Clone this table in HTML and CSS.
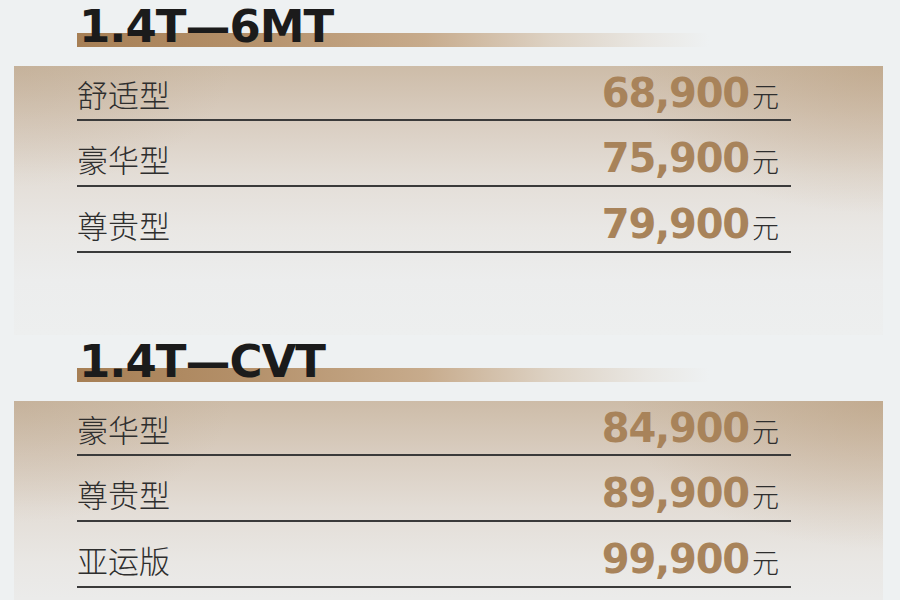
FILE: index.html
```html
<!DOCTYPE html>
<html lang="zh-CN">
<head>
<meta charset="utf-8">
<title>1.4T 价格表</title>
<link rel="stylesheet" href="styles.css">
</head>
<body>
<div class="page">
  <section class="group">
    <h2 class="heading">1.4T—6MT</h2>
    <div class="panel">
      <div class="row"><span class="name">舒适型</span><span class="price">68,900<span class="unit">元</span></span></div>
      <div class="row"><span class="name">豪华型</span><span class="price">75,900<span class="unit">元</span></span></div>
      <div class="row"><span class="name">尊贵型</span><span class="price">79,900<span class="unit">元</span></span></div>
    </div>
  </section>
  <section class="group">
    <h2 class="heading">1.4T—CVT</h2>
    <div class="panel">
      <div class="row"><span class="name">豪华型</span><span class="price">84,900<span class="unit">元</span></span></div>
      <div class="row"><span class="name">尊贵型</span><span class="price">89,900<span class="unit">元</span></span></div>
      <div class="row"><span class="name">亚运版</span><span class="price">99,900<span class="unit">元</span></span></div>
    </div>
  </section>
</div>
</body>
</html>
```
FILE: styles.css
```css
html, body {
  margin: 0;
  padding: 0;
  overflow: hidden;
}
body {
  background: #eef1f2;
  font-family: "Noto Sans CJK SC", "Noto Sans", sans-serif;
}
.page {
  width: 900px;
  height: 600px;
  overflow: hidden;
}
.group {
  height: 335px;
}
.heading {
  margin: 0 0 0 77px;
  height: 66px;
  padding-left: 2px;
  font-family: "DejaVu Sans", sans-serif;
  font-weight: bold;
  font-size: 45px;
  line-height: 54px;
  letter-spacing: -1px;
  color: #1b1b1b;
  background-image: linear-gradient(to right, #a67f55 0%, #b38f68 25%, #c7ab8c 55%, #ddd2c4 75%, #e9e7e3 90%, rgba(238,241,242,0) 100%);
  background-repeat: no-repeat;
  background-size: 632px 14px;
  background-position: 0 33px;
}
.panel {
  margin: 0 17px 0 14px;
  height: 269px;
  padding: 0 0 0 63px;
  box-sizing: border-box;
  background:
    radial-gradient(ellipse 30% 55% at 100% 0%, rgba(180,150,115,0.45), rgba(180,150,115,0)),
    radial-gradient(ellipse 25% 45% at 0% 0%, rgba(180,155,125,0.3), rgba(180,155,125,0)),
    linear-gradient(to bottom, #cdbca8 0%, #d9cdc0 20%, #e3ddd6 40%, #e9e7e4 60%, #eceded 80%, #edefef 100%);
}
.row {
  width: 714px;
  height: 66px;
  box-sizing: border-box;
  display: flex;
  justify-content: space-between;
  align-items: baseline;
  line-height: 54px;
  padding: 10px 12px 0 0;
  border-bottom: 2px solid #3a3a3a;
}
.row:first-child {
  height: 55px;
  padding-top: 0;
}
.name {
  font-size: 31px;
  font-weight: 300;
  color: #2e2e2e;
}
.price {
  font-family: "DejaVu Sans", sans-serif;
  font-weight: bold;
  font-size: 40px;
  letter-spacing: -1.2px;
  color: #a8835a;
}
.unit {
  font-family: "Noto Sans CJK SC", sans-serif;
  font-weight: 300;
  font-size: 27px;
  letter-spacing: 0;
  color: #2e2e2e;
  margin-left: 3px;
}
```
